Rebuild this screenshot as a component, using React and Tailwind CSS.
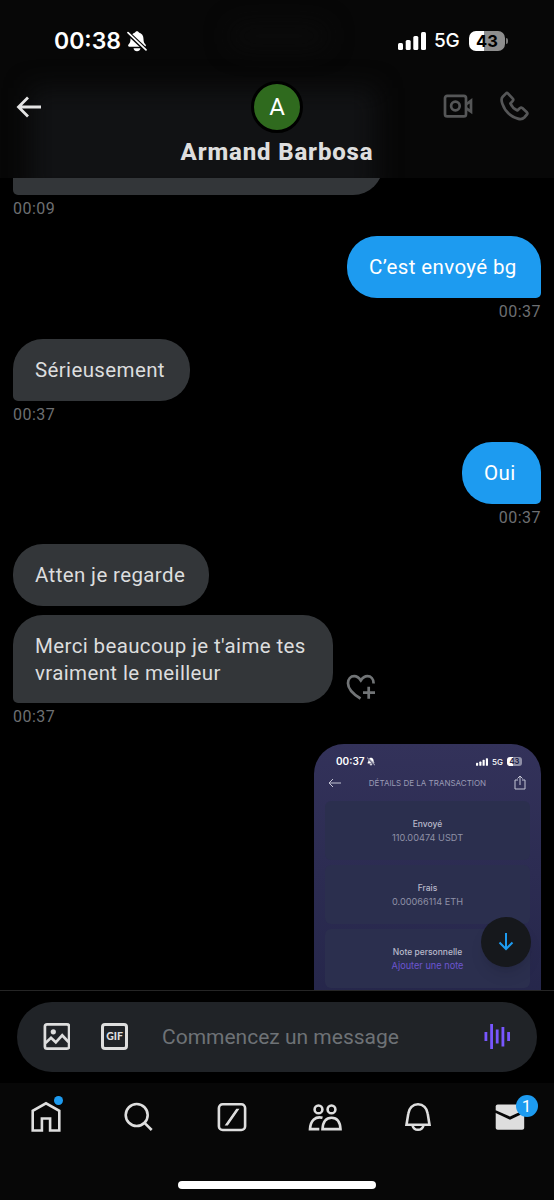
import React from 'react';

const chirp = "font-[Roboto,'Liberation_Sans',sans-serif]";

const Signal = ({ className }) => (
  <svg viewBox="0 0 28 18" className={className} fill="currentColor">
    <rect x="0" y="11" width="5" height="7" rx="1.5" />
    <rect x="7.7" y="8" width="5" height="10" rx="1.5" />
    <rect x="15.3" y="4" width="5" height="14" rx="1.5" />
    <rect x="23" y="0" width="5" height="18" rx="1.5" />
  </svg>
);

const BellOff = ({ className, gap }) => (
  <svg viewBox="0 0 20 21" className={className} fill="currentColor">
    <path d="M10 .3c1 0 1.7.6 1.900 1.300 3 .9 4.600 3.200 4.600 6.300 0 3.400.8 4.200 2 5.600.8 1.100.3 2.200-1 2.200h-15c-1.300 0-1.800-1.100-1-2.200 1.200-1.400 2-2.200 2-5.600 0-3.100 1.600-5.400 4.600-6.300C8.300.9 9 .3 10 .3zM6.500 17.300h7c-.3 1.800-1.700 3-3.500 3s-3.200-1.200-3.500-3z" />
    <path d="M.5 1.500 19.500 19.500" stroke={gap} strokeWidth="4.200" />
    <path d="M1 1.600 19 18.800" stroke="currentColor" strokeWidth="1.700" strokeLinecap="round" />
  </svg>
);

const Header = () => (
  <header className="h-[178px] shrink-0 bg-[#070707] relative overflow-hidden">
    {/* bubble scrolled under the translucent bar */}
    <div className="absolute left-[30px] top-[88px] w-[346px] h-[110px] bg-[#111214] blur-md" />
    <div className="absolute left-[230px] top-6 w-[98px] h-6 rounded-full bg-[#0b0b0b] blur-md" />
    <div className="relative h-[82px] pl-[54px] pr-[46px] flex items-center justify-between text-white font-[Inter,sans-serif]">
      <div className="flex items-center">
        <span className="text-[23px] font-semibold w-[68px] whitespace-nowrap">00:38</span>
        <BellOff className="w-5 h-[21px] ml-[5px]" gap="#070707" />
      </div>
      <div className="flex items-center">
        <Signal className="w-7 h-[18px]" />
        <span className="ml-[8px] w-[29px] pt-px text-[19px] font-medium tracking-[-0.3px]">5G</span>
        <div className="ml-[6px] w-9 h-5 rounded-[7px] bg-[linear-gradient(90deg,#fff_43%,#8d8d8d_43%)] text-black text-[16.5px] leading-5 font-bold text-center">43</div>
        <div className="ml-px w-[2px] h-[6px] rounded-r-full bg-[#777]" />
      </div>
    </div>
    <div className="relative flex items-center justify-between h-[50px] pl-4 pr-[25px]">
      <svg viewBox="0 0 26 22" className="w-[26px] h-[22px]" fill="none" stroke="#e4e4e4" strokeWidth="2.800">
        <path d="M25 11H2.500M12 1.500 2.500 11l9.500 9.500" />
      </svg>
      <div className="flex items-center gap-[26px] mb-0.5 text-[#555657]">
        <svg viewBox="0 0 30 24" className="w-[30px] h-6" fill="none" stroke="currentColor" strokeWidth="2.700">
          <rect x="2" y="1.800" width="21" height="20.600" rx="2.200" />
          <circle cx="12.400" cy="12" r="4.300" />
          <path d="M23 10.500 28 6.800v10.800l-5-3.500" />
        </svg>
        <svg viewBox="0 0 30 30" className="w-[30px] h-[30px]" fill="none" stroke="currentColor" strokeWidth="2.700" strokeLinejoin="round">
          <path d="M6.800 2.600 3.700 5.700c-1.700 1.700-1.300 4.300-.4 6.900 2.500 7.200 8.400 13 15.500 15 2.600.8 5 .4 6.500-1.100l2.600-3c.6-.7.6-1.500 0-2.200l-4.600-4.200c-.7-.7-1.600-.7-2.300 0l-2.600 2.400c-2.900-1.300-5.700-4-7-7l2.400-2.600c.7-.7.7-1.500 0-2.200L9.100 2.600c-.7-.7-1.600-.7-2.300 0z" />
        </svg>
      </div>
      <div className={`absolute left-[251px] -top-[1px] size-[52px] rounded-full bg-[#2f6a1e] border-[3px] border-black text-white text-[24px] flex items-center justify-center ${chirp}`}>A</div>
    </div>
    <h1 className={`relative text-center text-[#dedede] text-[24px] leading-[41px] tracking-[0.85px] font-extrabold ${chirp}`}>Armand Barbosa</h1>
  </header>
);

const Time = ({ children, right }) => (
  <div className={`h-[27px] leading-[27px] text-[16px] tracking-[0.5px] text-[#6d6f72] ${right ? 'text-right' : ''} ${chirp}`}>{children}</div>
);

const Bubble = ({ children, className }) => (
  <div className={`pl-[22px] pt-[17.5px] text-[20.5px] leading-[27px] tracking-[0.37px] whitespace-nowrap ${chirp} ${className}`}>{children}</div>
);

const Card = ({ label, value, accent }) => (
  <div className="h-[59px] rounded-md bg-[#2b2f4e] pt-[17px] text-center">
    <p className="text-[8.500px] leading-[13px] font-medium text-[#b9bacb]">{label}</p>
    <p className={`text-[9.200px] leading-[14px] ${accent ? 'text-[#6b55cf]' : 'text-[#8f91a6]'}`}>{value}</p>
  </div>
);

const Receipt = () => (
  <div className="w-[227px] h-[260px] shrink-0 self-end rounded-t-[30px] bg-linear-to-b from-[#33325a] to-[#25264a] px-[11px] font-[Inter,sans-serif]">
    <div className="h-[28px] pt-[7px] pl-[11px] pr-[8px] flex items-center justify-between text-white">
      <div className="flex items-center">
        <span className="text-[10px] font-semibold">00:37</span>
        <BellOff className="w-2 h-[9px] ml-0.5" gap="#33325a" />
      </div>
      <div className="flex items-center">
        <Signal className="w-3 h-[8px]" />
        <span className="ml-1 text-[8px] font-medium">5G</span>
        <span className="ml-1 w-[15px] h-[9px] rounded-[3px] bg-[linear-gradient(90deg,#fff_43%,#8f8fa6_43%)] text-[#25264a] text-[7.500px] leading-[9px] font-bold text-center">43</span>
      </div>
    </div>
    <div className="h-[29px] pl-[3px] pr-[4px] pb-[8px] flex items-center justify-between text-[#9a9bb5]">
      <svg viewBox="0 0 13 10" className="w-[13px] h-[10px]" fill="none" stroke="#c4c5d4">
        <path d="M13 5H1M5 1 1 5l4 4" />
      </svg>
      <span className="text-[8px] whitespace-nowrap">DÉTAILS DE LA TRANSACTION</span>
      <svg viewBox="0 0 12 15" className="w-3 h-[15px]" fill="none" stroke="#c4c5d4">
        <path d="M4 5H1v9h10V5H8M6 10V1M3.500 3.500 6 1l2.500 2.500" />
      </svg>
    </div>
    <div className="flex flex-col gap-[5px]">
      <Card label="Envoyé" value="110.00474 USDT" />
      <Card label="Frais" value="0.00066114 ETH" />
      <Card label="Note personnelle" value="Ajouter une note" accent />
    </div>
  </div>
);

const Composer = () => (
  <div className="h-[93px] shrink-0 border-t border-[#252525] bg-black pt-[11px] px-[17px]">
    <div className="h-[70px] rounded-full bg-[#202327] flex items-center pl-[26px] pr-[26px]">
      <svg viewBox="-0.5 0 27 27" className="mb-px w-[27px] h-[27px]" fill="none" stroke="#dedede" strokeWidth="2.700">
        <rect x="1.400" y="1.400" width="24.200" height="24.200" rx="2.200" />
        <circle cx="9.800" cy="8.800" r="2.600" fill="#dedede" stroke="none" />
        <path d="m2 20 5.500-5.200 4.800 4.500 6.400-7L25 19" />
      </svg>
      <div className="ml-[31px] mb-px size-[27px] rounded-[4px] border-[3px] border-[#dedede] text-[#dedede] text-[10.500px] leading-none font-black font-[Lato,sans-serif] flex items-center justify-center">GIF</div>
      <span className={`ml-[34px] pt-0.5 text-[21px] text-[#6e7276] whitespace-nowrap ${chirp}`}>Commencez un message</span>
      <svg viewBox="0 0 27 27" className="ml-auto mb-px w-[27px] h-[27px]" fill="#7856ff">
        <rect x="0.500" y="9" width="2.800" height="9" />
        <rect x="6.200" y="1" width="2.800" height="25" />
        <rect x="11.800" y="6.500" width="2.800" height="14" />
        <rect x="17.500" y="4" width="2.800" height="19.500" />
        <rect x="23.200" y="9" width="2.800" height="9" />
      </svg>
    </div>
  </div>
);

const navIcon = 'w-[34px] h-[32px] fill-none stroke-[#dedede]';

const NavBar = () => (
  <nav className="h-[117px] shrink-0 bg-[#070707] flex flex-col items-center">
    <div className="w-full pt-[18px] h-[98px] flex -ml-px">
      <div className="w-[93px] shrink-0 flex justify-center relative h-8">
        <svg viewBox="0 0 34 32" className={navIcon} strokeWidth="2.600">
          <path d="M3.700 29.500V9.800L17 2.300l13.300 7.500v19.700h-9.200v-12h-8.200v12z" />
        </svg>
        <span className="absolute left-[54px] -top-[5px] size-[9px] rounded-full bg-[#1d9bf0]" />
      </div>
      <div className="w-[93px] shrink-0 flex justify-center">
        <svg viewBox="0 0 34 32" className={navIcon} strokeWidth="2.600">
          <circle cx="14.700" cy="14" r="11" />
          <path d="m22.500 21.800 7.200 7.200" />
        </svg>
      </div>
      <div className="w-[93px] shrink-0 flex justify-center">
        <svg viewBox="0 0 34 32" className={navIcon} strokeWidth="2.600">
          <rect x="3.900" y="3.200" width="26.200" height="25.800" rx="3.800" />
          <path d="M10.800 23.800h1.700L23.300 8.300h-1.700z" strokeWidth="1.200" fill="#dedede" />
        </svg>
      </div>
      <div className="w-[93px] shrink-0 flex justify-center">
        <svg viewBox="0 0 34 32" className={navIcon} strokeWidth="2.600">
          <circle cx="10.500" cy="8.400" r="3.900" />
          <circle cx="23.500" cy="8.400" r="3.900" />
          <path d="M14.500 16.800c-7-1.800-12 2.500-12.500 11.300h9.300M14.500 28.100c.4-7.500 3.600-11.400 9.100-11.400s8.500 3.900 8.900 11.400z" />
        </svg>
      </div>
      <div className="w-[93px] shrink-0 flex justify-center">
        <svg viewBox="0 0 34 32" className={navIcon} strokeWidth="2.600">
          <path d="M5.500 23.800 7.300 12.700c.6-5.700 4.600-9.500 9.700-9.500s9.100 3.800 9.700 9.500l1.800 11.100zM11.500 24.500c.8 2.800 2.800 4.300 5.500 4.300s4.700-1.500 5.500-4.300" />
        </svg>
      </div>
      <div className="w-[90px] shrink-0 flex justify-center relative h-8">
        <svg viewBox="0 0.6 34 32" className="w-[34px] h-[32px]" fill="#dedede">
          <path d="M2.700 6.200c0-1.200.9-2 2-2h24.500c1.200 0 2 .8 2 2v3.300L17 16.200 2.700 9.800z" />
          <path d="m2.700 12.600 14.300 6.700 14.200-6.700v14.700c0 1.200-.8 2-2 2H4.700c-1.100 0-2-.8-2-2z" />
        </svg>
        <span className={`absolute left-[51px] -top-[6px] size-[22px] rounded-full bg-[#1d9bf0] text-white text-[17px] leading-[22px] text-center ${chirp}`}>1</span>
      </div>
    </div>
    <div className="w-[198px] h-2 rounded-full bg-white" />
  </nav>
);

const App = () => {
  return (
    <div className="w-[554px] h-[1200px] bg-black overflow-hidden flex flex-col">
      <Header />
      <main className="relative flex-1 min-h-0 overflow-hidden px-[13px] flex flex-col">
        <div className="w-[370px] h-[62px] -mt-[45px] shrink-0 rounded-[30px] rounded-bl-[5px] bg-[#333639]" />
        <Time>00:09</Time>
        <Bubble className="mt-[14px] w-[194px] h-[62px] shrink-0 self-end rounded-[30px] rounded-br-[5px] bg-[#1d9bf0] text-white">C’est envoyé bg</Bubble>
        <Time right>00:37</Time>
        <Bubble className="mt-[14px] w-[177px] h-[62px] shrink-0 rounded-[30px] rounded-bl-[5px] bg-[#333639] text-[#dcddde]">Sérieusement</Bubble>
        <Time>00:37</Time>
        <Bubble className="mt-[14px] w-[79px] h-[62px] shrink-0 self-end rounded-[30px] rounded-br-[5px] bg-[#1d9bf0] text-white">Oui</Bubble>
        <Time right>00:37</Time>
        <Bubble className="mt-[13px] w-[196px] h-[62px] shrink-0 rounded-[30px] bg-[#333639] text-[#dcddde]">Atten je regarde</Bubble>
        <div className="mt-[9px] flex items-end shrink-0">
          <Bubble className="w-[320px] h-[88px] rounded-[30px] rounded-bl-[5px] bg-[#333639] text-[#dcddde]">
            Merci beaucoup je t'aime tes<br />vraiment le meilleur
          </Bubble>
          <svg viewBox="0 0 30 26" className="ml-[13px] mb-[3px] w-[30px] h-[26px]" fill="none" stroke="#717476" strokeWidth="2.700">
            <path d="M14.500 24.500C7 20 2 15 2 9.200c0-4.200 2.700-7 6.200-7 2.800 0 4.800 1.500 6.600 4.200 1.800-2.700 3.800-4.200 6.600-4.200 3.500 0 6.200 2.800 6.200 7.300M22.700 12.800v12M17 18.700h12" />
          </svg>
        </div>
        <Time>00:37</Time>
        <div className="h-[14px] shrink-0" />
        <Receipt />
        <button className="absolute right-[23px] bottom-[23px] size-[50px] rounded-full bg-[#16181c] shadow-lg flex items-center justify-center">
          <svg viewBox="0 0 16 18" className="w-4 h-[18px]" fill="none" stroke="#1d9bf0" strokeWidth="2">
            <path d="M8 0v16M1.500 9.500 8 16l6.500-6.500" />
          </svg>
        </button>
      </main>
      <Composer />
      <NavBar />
    </div>
  );
};

export default App;
